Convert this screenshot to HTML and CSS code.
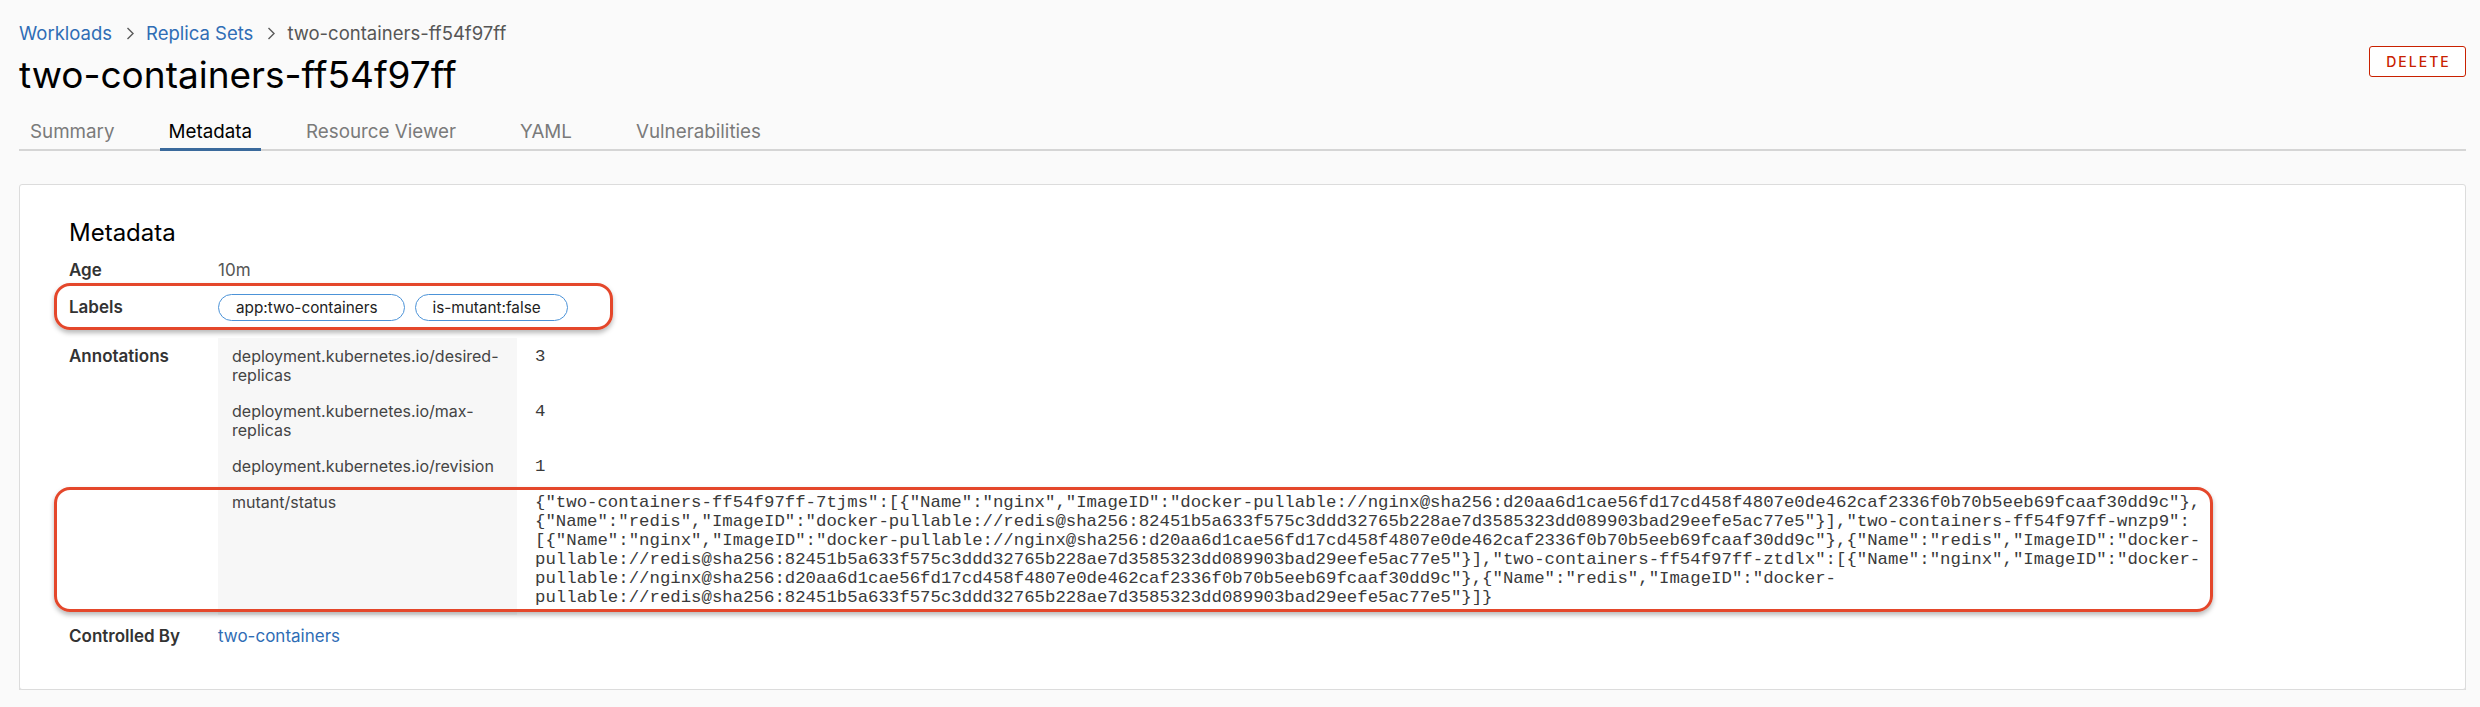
FILE: index.html
```html
<!DOCTYPE html>
<html lang="en">
<head>
<meta charset="utf-8">
<title>two-containers-ff54f97ff</title>
<link rel="stylesheet" href="styles.css">
</head>
<body>
<div class="page">
  <header class="head">
    <div class="head-main">
      <nav class="crumbs">
        <a href="#">Workloads</a>
        <svg class="crumb-sep" viewBox="0 0 8 13"><polyline points="1.5,1 7,6.5 1.5,12"/></svg>
        <a href="#">Replica Sets</a>
        <svg class="crumb-sep" viewBox="0 0 8 13"><polyline points="1.5,1 7,6.5 1.5,12"/></svg>
        <span class="crumb-current">two-containers-ff54f97ff</span>
      </nav>
      <h1 class="title">two-containers-ff54f97ff</h1>
    </div>
    <button class="btn-delete">DELETE</button>
  </header>

  <nav class="tabs">
    <span class="tab">Summary</span>
    <span class="tab tab-active">Metadata</span>
    <span class="tab">Resource Viewer</span>
    <span class="tab">YAML</span>
    <span class="tab">Vulnerabilities</span>
  </nav>

  <section class="card">
    <h2 class="card-title">Metadata</h2>
    <div class="rows">
      <div class="row row-age">
        <div class="label">Age</div>
        <div class="value">10m</div>
      </div>
      <div class="row row-labels">
        <div class="label">Labels</div>
        <div class="chips">
          <span class="chip">app:two-containers</span>
          <span class="chip">is-mutant:false</span>
        </div>
      </div>
      <div class="row row-annot">
        <div class="label">Annotations</div>
        <div class="annot">
          <div class="akey">deployment.kubernetes.io/desired-replicas</div>
          <div class="aval">3</div>
          <div class="akey">deployment.kubernetes.io/max-replicas</div>
          <div class="aval">4</div>
          <div class="akey">deployment.kubernetes.io/revision</div>
          <div class="aval">1</div>
          <div class="akey">mutant/status</div>
          <div class="aval">{"two-containers-ff54f97ff-7tjms":[{"Name":"nginx","ImageID":"docker-pullable://nginx@sha256:d20aa6d1cae56fd17cd458f4807e0de462caf2336f0b70b5eeb69fcaaf30dd9c"},{"Name":"redis","ImageID":"docker-pullable://redis@sha256:82451b5a633f575c3ddd32765b228ae7d3585323dd089903bad29eefe5ac77e5"}],"two-containers-ff54f97ff-wnzp9":[{"Name":"nginx","ImageID":"docker-pullable://nginx@sha256:d20aa6d1cae56fd17cd458f4807e0de462caf2336f0b70b5eeb69fcaaf30dd9c"},{"Name":"redis","ImageID":"docker-pullable://redis@sha256:82451b5a633f575c3ddd32765b228ae7d3585323dd089903bad29eefe5ac77e5"}],"two-containers-ff54f97ff-ztdlx":[{"Name":"nginx","ImageID":"docker-pullable://nginx@sha256:d20aa6d1cae56fd17cd458f4807e0de462caf2336f0b70b5eeb69fcaaf30dd9c"},{"Name":"redis","ImageID":"docker-pullable://redis@sha256:82451b5a633f575c3ddd32765b228ae7d3585323dd089903bad29eefe5ac77e5"}]}</div>
        </div>
      </div>
      <div class="row row-ctrl">
        <div class="label">Controlled By</div>
        <div class="value"><a href="#" class="link">two-containers</a></div>
      </div>
    </div>
    <div class="hl hl-labels"></div>
    <div class="hl hl-status"></div>
  </section>
</div>
</body>
</html>
```
FILE: styles.css
```css
* { box-sizing: border-box; }
html, body { margin: 0; padding: 0; }
body {
  background: #fafafa;
  font-family: Inter, "Noto Sans", sans-serif;
  color: #333;
}
.page { padding: 21px 14px 0 19px; }

.head {
  display: flex;
  justify-content: space-between;
  align-items: flex-start;
}
.crumbs {
  display: flex;
  align-items: center;
  font-size: 18.5px;
  line-height: 24px;
  color: #565656;
}
.crumbs a { color: #2f6db5; text-decoration: none; }
.crumb-sep {
  width: 8px;
  height: 13px;
  margin: 0 12px 0 14px;
}
.crumb-sep polyline { fill: none; stroke: #5a5a5a; stroke-width: 1.4; }
.title {
  margin: 8px 0 0;
  font-size: 37px;
  font-weight: 400;
  line-height: 44px;
  color: #000;
}
.btn-delete {
  margin-top: 25px;
  width: 97px;
  height: 31px;
  padding: 0;
  border: 1px solid #c92100;
  border-radius: 3px;
  background: #fff;
  color: #c92100;
  font-family: Inter, "Noto Sans", sans-serif;
  font-size: 14px;
  font-weight: 500;
  letter-spacing: 2px;
  text-indent: 2px;
}

.tabs {
  display: flex;
  gap: 36px;
  margin-top: 23px;
  padding-left: 2px;
  box-shadow: inset 0 -2px 0 #d5d5d5;
}
.tab {
  min-width: 90px;
  padding: 0 9px 7px;
  font-size: 18.8px;
  line-height: 24px;
  text-align: center;
  color: #7a7a7a;
}
.tab-active {
  color: #000;
  box-shadow: inset 0 -3px 0 #3a6a9c;
}

.card {
  position: relative;
  margin-top: 33px;
  padding: 33px 40px 43px 49px;
  background: #fff;
  border: 1px solid #dcdcdc;
  border-radius: 3px;
  box-shadow: 0 3px 0 #dcdcdc;
}
.card-title {
  margin: 0;
  font-size: 24px;
  font-weight: 400;
  line-height: 30px;
  color: #000;
}
.rows { margin-top: 10px; }
.row {
  display: grid;
  grid-template-columns: 149px 1fr;
  align-items: start;
}
.label {
  font-size: 17px;
  font-weight: 600;
  color: #333;
}
.value {
  font-size: 17px;
  color: #565656;
}
.row-age .label, .row-age .value { line-height: 24px; }
.row-labels { margin-top: 12px; }
.row-labels .label { line-height: 27px; }
.chips { display: flex; gap: 10px; }
.chip {
  height: 27px;
  padding: 0 26px 0 17px;
  border: 1px solid #4c93d8;
  border-radius: 14px;
  font-size: 15.3px;
  line-height: 25px;
  color: #222;
}
.row-annot { margin-top: 17px; }
.row-annot .label { padding-top: 9px; line-height: 19px; }
.annot {
  display: grid;
  grid-template-columns: 299px auto;
  justify-content: start;
}
.akey, .aval {
  padding: 9px 0 8px;
  line-height: 19px;
}
.akey {
  padding-left: 14px;
  padding-right: 10px;
  background: #f7f7f7;
  font-size: 16px;
  color: #444;
}
.aval {
  padding-left: 18px;
  max-width: 1710px;
  font-family: "Liberation Mono", "Courier New", monospace;
  font-size: 17.35px;
  color: #3a3a3a;
}
.row-ctrl { margin-top: 12px; }
.row-ctrl .label, .row-ctrl .value { line-height: 19px; }
.link { color: #2f6db5; text-decoration: none; }

.hl {
  position: absolute;
  border: 3px solid #e4472b;
  border-radius: 16px;
  box-shadow: 0 3px 5px rgba(0, 0, 0, 0.28);
  pointer-events: none;
}
.hl-labels { left: 34px; top: 98px; width: 559px; height: 47px; }
.hl-status { left: 34px; top: 302px; width: 2159px; height: 125px; }
```
